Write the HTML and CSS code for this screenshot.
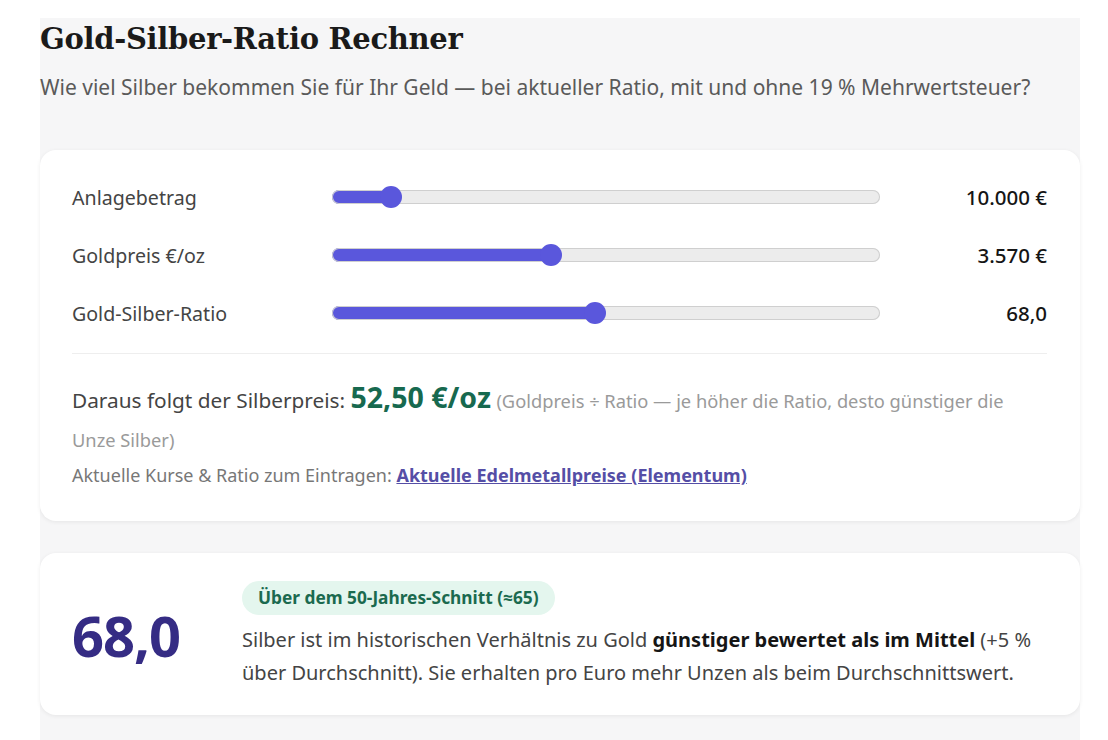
FILE: index.html
```html
<!DOCTYPE html>
<html lang="de">

<head>
    <meta charset="UTF-8">
    <meta name="viewport" content="width=device-width, initial-scale=1.0">
    <title>Gold-Silber-Ratio Rechner</title>
    <link rel="stylesheet" href="styles.css">
</head>

<body>
    <div class="page">
        <h1>Gold-Silber-Ratio Rechner</h1>
        <p class="lead">Wie viel Silber bekommen Sie für Ihr Geld — bei aktueller Ratio, mit und ohne 19 % Mehrwertsteuer?</p>

        <div class="card inputs">
            <div class="row">
                <label for="amount">Anlagebetrag</label>
                <input type="range" id="amount" min="1000" max="100000" step="1000" value="10000">
                <span class="value" id="amountOut">10.000 €</span>
            </div>
            <div class="row">
                <label for="gold">Goldpreis €/oz</label>
                <input type="range" id="gold" min="1000" max="7500" step="10" value="3570">
                <span class="value" id="goldOut">3.570 €</span>
            </div>
            <div class="row">
                <label for="ratio">Gold-Silber-Ratio</label>
                <input type="range" id="ratio" min="20" max="120" step="0.5" value="68">
                <span class="value" id="ratioOut">68,0</span>
            </div>

            <p class="result">
                Daraus folgt der Silberpreis: <strong id="silverPrice">52,50 €/oz</strong>
                <span class="hint">(Goldpreis ÷ Ratio — je höher die Ratio, desto günstiger die Unze Silber)</span>
            </p>
            <p class="source">Aktuelle Kurse &amp; Ratio zum Eintragen: <a href="#">Aktuelle Edelmetallpreise (Elementum)</a></p>
        </div>

        <div class="card verdict">
            <div class="big-ratio" id="bigRatio">68,0</div>
            <div class="verdict-text">
                <span class="badge">Über dem 50-Jahres-Schnitt (≈65)</span>
                <p>Silber ist im historischen Verhältnis zu Gold <b>günstiger bewertet als im Mittel</b> (+5 % über Durchschnitt). Sie erhalten pro Euro mehr Unzen als beim Durchschnittswert.</p>
            </div>
        </div>
    </div>

    <script>
        // fill the left part of each slider up to the thumb
        function paintSlider(input) {
            const pct = (input.value - input.min) / (input.max - input.min) * 100;
            input.style.setProperty('--p', pct);
        }

        document.querySelectorAll('input[type=range]').forEach(input => {
            paintSlider(input);
            input.addEventListener('input', () => paintSlider(input));
        });
    </script>
</body>

</html>
```

FILE: styles.css
```css
body {
    margin: 0;
    background-color: #ffffff;
    font-family: 'Noto Sans', 'Open Sans', sans-serif;
    color: #444;
}

.page {
    width: 1040px;
    margin: 18px 0 0 40px;
    min-height: 722px;
    background-color: #f6f6f7;
}

h1 {
    margin: 0;
    padding-top: 2px;
    font-family: 'DejaVu Serif', 'Liberation Serif', serif;
    font-size: 29px;
    line-height: 38px;
    font-weight: bold;
    color: #1a1a1a;
    letter-spacing: -0.3px;
}

.lead {
    margin: 15px 0 0;
    font-size: 21px;
    line-height: 28px;
    color: #5a5a5a;
}

.card {
    background-color: #fff;
    border-radius: 16px;
    box-shadow: 0 1px 4px rgba(0, 0, 0, 0.07);
}

.inputs {
    margin-top: 49px;
    padding: 18px 33px 30px 32px;
}

.row {
    display: grid;
    grid-template-columns: 260px 548px 1fr;
    align-items: center;
    height: 58px;
}

.row label {
    font-size: 19.6px;
    color: #444;
}

.row .value {
    text-align: right;
    font-size: 20.5px;
    font-weight: 500;
    color: #151515;
}

input[type=range] {
    -webkit-appearance: none;
    appearance: none;
    width: 548px;
    height: 14px;
    margin: 0;
    border-radius: 7px;
    box-shadow: inset 0 0 0 1px #cfcfcf;
    background: linear-gradient(to right,
            #5a57dc calc(var(--p) * (100% - 22px) / 100 + 11px),
            #ececec 0);
    outline: none;
}

input[type=range]::-webkit-slider-thumb {
    -webkit-appearance: none;
    width: 22px;
    height: 22px;
    border-radius: 50%;
    background: #5a57dc;
    border: none;
    cursor: pointer;
}

.result {
    margin: 0;
    margin-top: 11px;
    padding-top: 27px;
    border-top: 1px solid #eeeeee;
    font-size: 20.8px;
    line-height: 38px;
    color: #444;
}

.result strong {
    font-size: 28.5px;
    line-height: 1;
    font-weight: bold;
    color: #17694f;
}

.result .hint {
    font-size: 18.3px;
    color: #9a9a9a;
}

.source {
    margin: 0;
    font-size: 18px;
    line-height: 32px;
    color: #777;
}

.source a {
    font-weight: bold;
    color: #554ea6;
}

.verdict {
    margin-top: 32px;
    padding: 28px 32px 26px;
    display: grid;
    grid-template-columns: 170px 1fr;
    align-items: center;
}

.big-ratio {
    font-size: 56px;
    font-weight: bold;
    color: #352c84;
    letter-spacing: -1px;
}

.badge {
    display: inline-block;
    padding: 0 16px;
    height: 34px;
    line-height: 34px;
    border-radius: 17px;
    background-color: #e4f6ee;
    color: #1b6a4f;
    font-size: 17.3px;
    font-weight: bold;
}

.verdict-text p {
    margin: 8px 0 0;
    font-size: 20px;
    line-height: 33px;
    color: #444;
}

.verdict-text b {
    color: #151515;
}
```
